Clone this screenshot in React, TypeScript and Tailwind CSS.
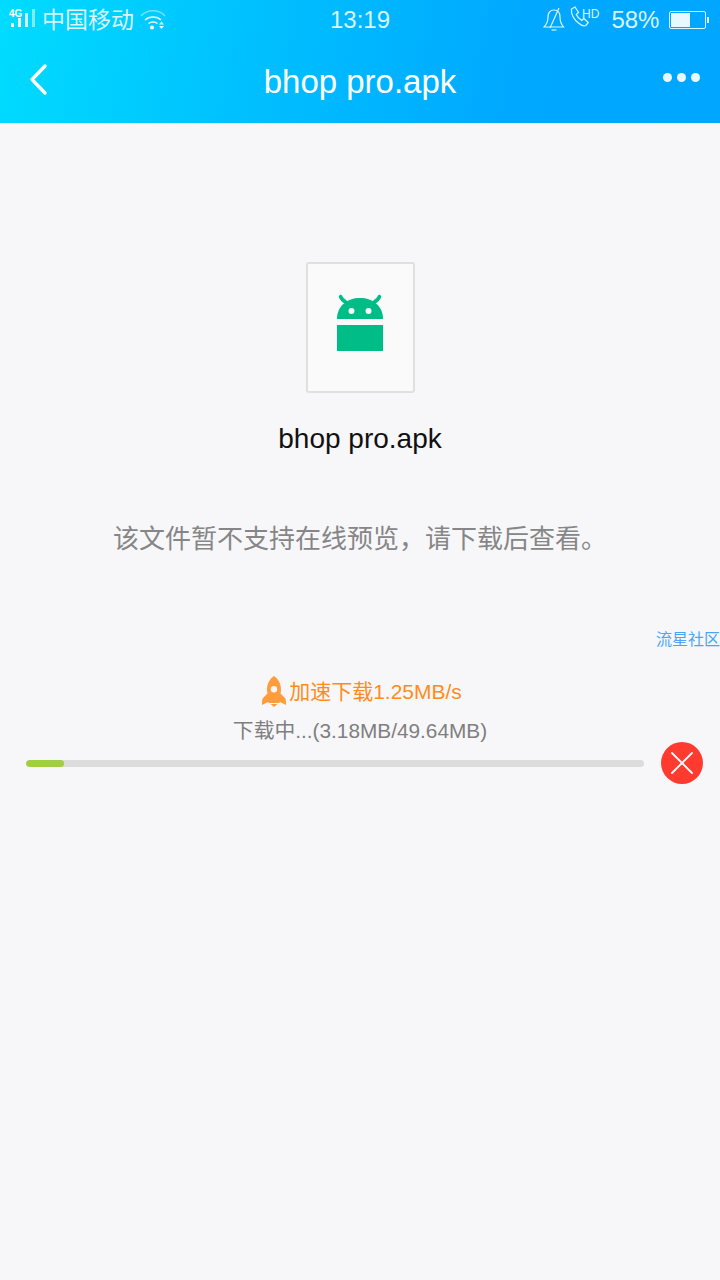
import React from "react";

const cjk = "font-['Liberation_Sans','Noto_Sans_CJK_SC',sans-serif]";

function Rocket() {
  return (
    <svg width="24" height="31" viewBox="0 0 24 31" className="shrink-0">
      <path
        fill="#ff9d3c"
        fillRule="evenodd"
        d="M12 0C16.500 3 19 8 19 13.500C19 15 18.800 16.500 18.500 17.500L22.500 21.500C23.500 22.500 24 24 24 26V29L18 26L17 27H7L6 26L0 29V26C0 24 .5 22.500 1.500 21.500L5.500 17.500C5.200 16.500 5 15 5 13.500C5 8 7.500 3 12 0ZM12 10a3.200 3.200 0 1 0 0 6.400 3.200 3.200 0 0 0 0-6.400Z"
      />
      <path fill="#ff9d3c" d="M8.500 28h7l-3.500 3z" />
    </svg>
  );
}

function Android() {
  return (
    <svg width="46" height="58" viewBox="0 0 46 58" className="block">
      <g fill="#00bc87">
        <path d="M0 25C0 12 10 4 23 4S46 12 46 25Z" />
        <rect y="31" width="46" height="26" />
      </g>
      <g stroke="#00bc87" strokeWidth="3.500" strokeLinecap="round" fill="none">
        <path d="M3.500 2.500C4.500 5 6.500 7 9 8" />
        <path d="M42.500 2.500C41.500 5 39.500 7 37 8" />
      </g>
      <circle cx="14.500" cy="17" r="3" fill="#fafafa" />
      <circle cx="31.500" cy="17" r="3" fill="#fafafa" />
    </svg>
  );
}

export default function App() {
  return (
    <div className={`w-[720px] h-[1280px] overflow-hidden bg-[#f7f7fa] flex flex-col ${cjk}`}>
      <header className="h-[123px] shrink-0 bg-[linear-gradient(100deg,#00dcff_0%,#00c0ff_35%,#00a8ff_72%,#00a6ff_100%)] text-white">
        <div className="h-[40px] flex items-center relative text-[#d9f5ff]">
          <div className="relative ml-[11px] w-[25px] h-[20px] mt-[-3px]">
            <span className="absolute left-[-2px] top-0 text-[10px] leading-[10px] font-bold text-white">4G</span>
            <div className="absolute left-0 bottom-[2px] flex items-end gap-[4px]">
              <span className="block w-[3px] h-[4px] bg-white" />
              <span className="block w-[3px] h-[9px] bg-white/90" />
              <span className="block w-[3px] h-[14px] bg-white/80" />
              <span className="block w-[3px] h-[18px] bg-white/50" />
            </div>
          </div>
          <span className="ml-[6px] text-[23px] leading-none">中国移动</span>
          <svg width="26" height="22" viewBox="0 0 26 22" className="ml-[6px]" fill="none" stroke="#e6f9ff">
            <path d="M1 7C7 0 19 0 25 7" strokeWidth="1.500" opacity=".5" />
            <path d="M5 11c4-4 12-4 16 0" strokeWidth="1.500" />
            <path d="M8.500 14.500c2.500-2 6.500-2 9 0" strokeWidth="1.500" />
            <circle cx="12" cy="18.500" r="2" fill="#fff" stroke="none" />
            <path d="M19 15.500h5l-2.500-3zM19 17h5l-2.500 3z" fill="#e6f9ff" stroke="none" />
          </svg>
          <span className="ml-[164px] text-[24px] leading-none">13:19</span>
          <svg width="22" height="24" viewBox="0 0 22 24" className="ml-[153px] mt-[-2px]" fill="none" stroke="#d9f5ff" strokeWidth="1.200">
            <path d="M1 20C4 17 5 13 5 10C5 5 8 3 11 3C14 3 17 5 17 10C17 13 18 17 20.500 20Z" />
            <path d="M16 1 7 21" />
            <path d="M8.500 23h5" />
          </svg>
          <svg width="22" height="22" viewBox="0 0 22 22" className="ml-[5px] mt-[-6px]" fill="none" stroke="#d9f5ff" strokeWidth="1.300">
            <path d="M1.500 3 5 1l3.500 5.500-2.200 2c1 2.500 3 4.500 5.500 6l2-2 4.500 4-2.500 3c-2 .8-4.500 0-7-2.300C4 14 .7 8 1.500 3Z" />
          </svg>
          <span className="ml-[-10px] mt-[-13px] text-[12px] leading-none">HD</span>
          <span className="ml-[12px] text-[24px] leading-none">58%</span>
          <div className="ml-[10px] w-[37px] h-[18px] border border-[#d9f5ff] rounded-[2px] p-[1px]">
            <div className="w-[57%] h-full bg-[#e8f8ff]" />
          </div>
          <span className="ml-[1px] w-[2px] h-[6px] bg-[#d9f5ff]" />
        </div>
        <div className="h-[83px] relative flex items-center justify-center">
          <svg width="20" height="34" viewBox="0 0 20 34" className="absolute left-[29px] top-[23px]" fill="none" stroke="#fff" strokeWidth="3.400" strokeLinecap="round" strokeLinejoin="round">
            <path d="M16 3 3 16.500 16 30" />
          </svg>
          <span className="text-[33px] leading-none">bhop pro.apk</span>
          <div className="absolute left-[663px] top-[33px] flex gap-[5px]">
            <span className="block w-[9px] h-[9px] rounded-full bg-[#e8f8ff]" />
            <span className="block w-[9px] h-[9px] rounded-full bg-[#e8f8ff]" />
            <span className="block w-[9px] h-[9px] rounded-full bg-[#e8f8ff]" />
          </div>
        </div>
      </header>

      <main className="flex-1 flex flex-col">
        <div className="mt-[139px] mx-auto w-[109px] h-[131px] bg-[#fafafa] border-2 border-[#e0e0e0] rounded-[3px] flex justify-center pt-[30px]">
          <Android />
        </div>
        <p className="mt-[30px] text-center text-[28px] leading-[32px] text-[#111]">bhop pro.apk</p>
        <p className="mt-[66px] text-center text-[26px] leading-[36px] text-[#868686]">该文件暂不支持在线预览，请下载后查看。</p>
        <p className="mt-[72px] ml-[656px] whitespace-nowrap text-[16px] leading-[22px] text-[#4aa5f5]">流星社区</p>
        <div className="mt-[24px] pl-[4px] flex justify-center items-center h-[32px]">
          <Rocket />
          <span className="ml-[3px] text-[21px] leading-none text-[#ff8c1a]">加速下载1.25MB/s</span>
        </div>
        <p className="mt-[11px] text-center text-[20.8px] leading-[26px] text-[#7f7f7f]">下载中...(3.18MB/49.64MB)</p>
        <div className="mt-[-2px] pl-[26px] flex items-center">
          <div className="w-[618px] h-[7px] rounded-full bg-[#dcdcdc] overflow-hidden">
            <div className="w-[38px] h-full bg-[#a0d040] rounded-full" />
          </div>
          <div className="ml-[17px] w-[42px] h-[42px] rounded-full bg-[#ff3a2f] flex items-center justify-center">
            <svg width="24" height="24" viewBox="0 0 24 24" stroke="#fff" strokeWidth="1.800" strokeLinecap="round">
              <path d="M2 2 22 22M22 2 2 22" />
            </svg>
          </div>
        </div>
      </main>
    </div>
  );
}
